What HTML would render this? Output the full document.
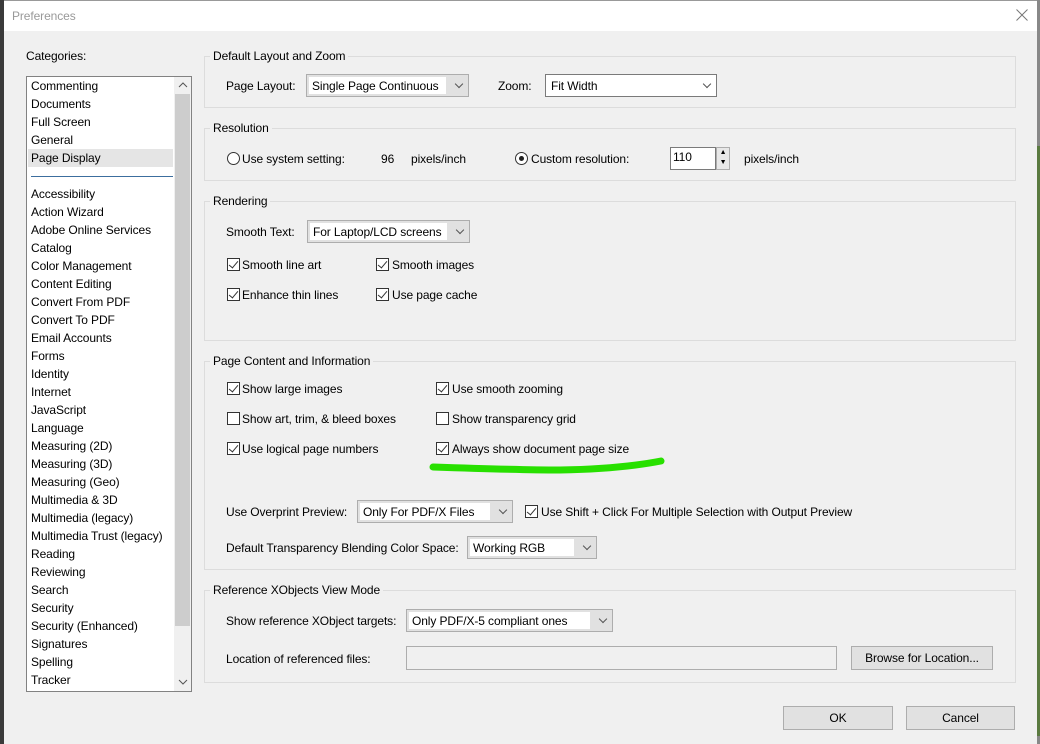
<!DOCTYPE html>
<html><head><meta charset="utf-8"><style>
*{box-sizing:border-box;margin:0;padding:0}
body{width:1040px;height:744px;position:relative;overflow:hidden;background:#f0f0f0;font-family:"Liberation Sans",sans-serif;font-size:12px;color:#000;letter-spacing:-0.1px}
.a{position:absolute;white-space:nowrap;line-height:14px}
.grp{position:absolute;border:1px solid #dcdcdc;left:204px;width:812px}
.gt{position:absolute;background:#f0f0f0;padding:0 3px;left:210px;line-height:14px}
.cb{position:absolute;width:13px;height:13px;border:1px solid #333;background:#fff}
.cb.c::after{content:"";position:absolute;left:3px;top:0px;width:4px;height:8px;border:solid #333;border-width:0 1.5px 1.5px 0;transform:rotate(40deg)}
.dd{position:absolute;border:1px solid #adadad;background:#e1e1e1;height:23px}
.dd .in{position:absolute;left:2px;top:2px;bottom:2px;background:#fff;padding-left:3px;line-height:18px}
.dd .ar{position:absolute;right:6px;top:6px;width:6px;height:6px;border:solid #555;border-width:0 1px 1px 0;transform:rotate(45deg)}
.rb{position:absolute;width:13px;height:13px;border:1px solid #333;border-radius:50%;background:#fff}
.btn{position:absolute;border:1px solid #adadad;background:#e1e1e1;text-align:center;line-height:22px;height:24px}
.li{position:absolute;left:31px;line-height:14px}
</style></head><body>
<div style="position:absolute;left:0;top:0;width:4px;height:744px;background:#3a3a3a"></div>
<div style="position:absolute;left:1037px;top:0;width:3px;height:744px;background:#888"></div>
<div style="position:absolute;left:1037px;top:146px;width:3px;height:590px;background:#5a7a40"></div>
<div style="position:absolute;left:4px;top:0;width:1033px;height:31px;background:#fff;border-top:1px solid #999"></div>
<div class="a" style="left:12px;top:9px;color:#999">Preferences</div>
<svg style="position:absolute;left:1016px;top:9px" width="12" height="12"><path d="M0.5 0.5L11.5 11.5M11.5 0.5L0.5 11.5" stroke="#777" stroke-width="1"/></svg>

<div class="a" style="left:26px;top:49px">Categories:</div>
<div style="position:absolute;left:26px;top:76px;width:166px;height:616px;border:1px solid #828282;background:#fff"></div>
<div style="position:absolute;left:174px;top:77px;width:17px;height:614px;background:#f0f0f0"></div>
<div style="position:absolute;left:175px;top:94px;width:15px;height:532px;background:#cdcdcd"></div>
<svg style="position:absolute;left:178px;top:82px" width="10" height="6"><path d="M1 5L5 1L9 5" stroke="#555" fill="none"/></svg>
<svg style="position:absolute;left:178px;top:679px" width="10" height="6"><path d="M1 1L5 5L9 1" stroke="#555" fill="none"/></svg>
<div style="position:absolute;left:28px;top:149px;width:145px;height:18px;background:#e5e5e5"></div>
<div style="position:absolute;left:31px;top:176px;width:142px;height:1px;background:#3c6e9e"></div>
<div class="li" style="top:79px">Commenting</div>
<div class="li" style="top:97px">Documents</div>
<div class="li" style="top:115px">Full Screen</div>
<div class="li" style="top:133px">General</div>
<div class="li" style="top:151px">Page Display</div>
<div class="li" style="top:187px">Accessibility</div>
<div class="li" style="top:205px">Action Wizard</div>
<div class="li" style="top:223px">Adobe Online Services</div>
<div class="li" style="top:241px">Catalog</div>
<div class="li" style="top:259px">Color Management</div>
<div class="li" style="top:277px">Content Editing</div>
<div class="li" style="top:295px">Convert From PDF</div>
<div class="li" style="top:313px">Convert To PDF</div>
<div class="li" style="top:331px">Email Accounts</div>
<div class="li" style="top:349px">Forms</div>
<div class="li" style="top:367px">Identity</div>
<div class="li" style="top:385px">Internet</div>
<div class="li" style="top:403px">JavaScript</div>
<div class="li" style="top:421px">Language</div>
<div class="li" style="top:439px">Measuring (2D)</div>
<div class="li" style="top:457px">Measuring (3D)</div>
<div class="li" style="top:475px">Measuring (Geo)</div>
<div class="li" style="top:493px">Multimedia &amp; 3D</div>
<div class="li" style="top:511px">Multimedia (legacy)</div>
<div class="li" style="top:529px">Multimedia Trust (legacy)</div>
<div class="li" style="top:547px">Reading</div>
<div class="li" style="top:565px">Reviewing</div>
<div class="li" style="top:583px">Search</div>
<div class="li" style="top:601px">Security</div>
<div class="li" style="top:619px">Security (Enhanced)</div>
<div class="li" style="top:637px">Signatures</div>
<div class="li" style="top:655px">Spelling</div>
<div class="li" style="top:673px">Tracker</div>

<div class="grp" style="top:56px;height:52px"></div>
<div class="gt" style="top:49px">Default Layout and Zoom</div>
<div class="a" style="left:226px;top:79px">Page Layout:</div>
<div class="dd" style="left:306px;top:74px;width:163px"><div class="in" style="right:22px">Single Page Continuous</div><div class="ar"></div></div>
<div class="a" style="left:498px;top:79px">Zoom:</div>
<div class="dd" style="left:545px;top:74px;width:172px;background:#fff;border-color:#7a7a7a"><div class="in" style="right:22px">Fit Width</div><div class="ar"></div></div>

<div class="grp" style="top:128px;height:53px"></div>
<div class="gt" style="top:121px">Resolution</div>
<div class="rb" style="left:227px;top:152px"></div>
<div class="a" style="left:242px;top:152px">Use system setting:</div>
<div class="a" style="left:381px;top:152px">96</div>
<div class="a" style="left:411px;top:152px">pixels/inch</div>
<div class="rb" style="left:515px;top:152px"></div>
<div style="position:absolute;left:519px;top:156px;width:5px;height:5px;border-radius:50%;background:#222"></div>
<div class="a" style="left:531px;top:152px">Custom resolution:</div>
<div style="position:absolute;left:670px;top:147px;width:46px;height:23px;border:1px solid #7a7a7a;background:#fff;padding-left:2px;line-height:18px">110</div>
<div style="position:absolute;left:716px;top:147px;width:14px;height:23px;border:1px solid #adadad;background:#e8e8e8;font-size:7px;text-align:center;line-height:10px">▲<br>▼</div>
<div class="a" style="left:744px;top:152px">pixels/inch</div>

<div class="grp" style="top:201px;height:140px"></div>
<div class="gt" style="top:194px">Rendering</div>
<div class="a" style="left:226px;top:225px">Smooth Text:</div>
<div class="dd" style="left:307px;top:220px;width:163px"><div class="in" style="right:22px">For Laptop/LCD screens</div><div class="ar"></div></div>
<div class="cb c" style="left:227px;top:258px"></div><div class="a" style="left:242px;top:258px">Smooth line art</div>
<div class="cb c" style="left:376px;top:258px"></div><div class="a" style="left:392px;top:258px">Smooth images</div>
<div class="cb c" style="left:227px;top:288px"></div><div class="a" style="left:242px;top:288px">Enhance thin lines</div>
<div class="cb c" style="left:376px;top:288px"></div><div class="a" style="left:392px;top:288px">Use page cache</div>

<div class="grp" style="top:361px;height:209px"></div>
<div class="gt" style="top:354px">Page Content and Information</div>
<div class="cb c" style="left:227px;top:382px"></div><div class="a" style="left:242px;top:382px">Show large images</div>
<div class="cb c" style="left:436px;top:382px"></div><div class="a" style="left:452px;top:382px">Use smooth zooming</div>
<div class="cb" style="left:227px;top:412px"></div><div class="a" style="left:242px;top:412px">Show art, trim, &amp; bleed boxes</div>
<div class="cb" style="left:436px;top:412px"></div><div class="a" style="left:452px;top:412px">Show transparency grid</div>
<div class="cb c" style="left:227px;top:442px"></div><div class="a" style="left:242px;top:442px">Use logical page numbers</div>
<div class="cb c" style="left:436px;top:442px"></div><div class="a" style="left:452px;top:442px">Always show document page size</div>
<svg style="position:absolute;left:0;top:0" width="1040" height="744"><path d="M433 467 Q520 470 560 470 Q620 469 661 461" stroke="#28e000" stroke-width="7" fill="none" stroke-linecap="round"/></svg>
<div class="a" style="left:226px;top:505px">Use Overprint Preview:</div>
<div class="dd" style="left:357px;top:500px;width:156px"><div class="in" style="right:22px">Only For PDF/X Files</div><div class="ar"></div></div>
<div class="cb c" style="left:525px;top:505px"></div><div class="a" style="left:541px;top:505px">Use Shift + Click For Multiple Selection with Output Preview</div>
<div class="a" style="left:226px;top:541px">Default Transparency Blending Color Space:</div>
<div class="dd" style="left:467px;top:536px;width:130px"><div class="in" style="right:22px">Working RGB</div><div class="ar"></div></div>

<div class="grp" style="top:590px;height:93px"></div>
<div class="gt" style="top:583px">Reference XObjects View Mode</div>
<div class="a" style="left:226px;top:614px">Show reference XObject targets:</div>
<div class="dd" style="left:406px;top:609px;width:207px"><div class="in" style="right:22px">Only PDF/X-5 compliant ones</div><div class="ar"></div></div>
<div class="a" style="left:226px;top:652px">Location of referenced files:</div>
<div style="position:absolute;left:406px;top:646px;width:431px;height:24px;border:1px solid #adadad;background:#f0f0f0"></div>
<div class="btn" style="left:851px;top:646px;width:142px">Browse for Location...</div>

<div class="btn" style="left:783px;top:706px;width:110px">OK</div>
<div class="btn" style="left:906px;top:706px;width:109px">Cancel</div>
</body></html>
